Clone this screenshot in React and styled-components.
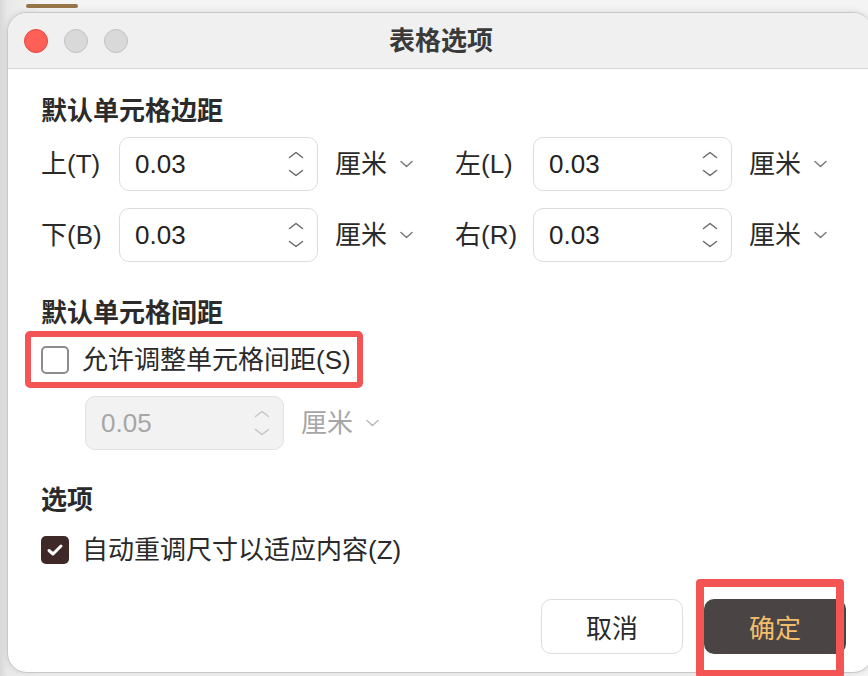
import React from "react";
import styled, { createGlobalStyle } from "styled-components";

const GlobalStyle = createGlobalStyle`
  html, body {
    margin: 0;
    padding: 0;
    background: #f3f3f3;
  }
  * {
    box-sizing: border-box;
  }
`;

const FONT = `"Liberation Sans", "Noto Sans CJK SC", sans-serif`;

const Page = styled.div`
  width: 868px;
  height: 676px;
  overflow: hidden;
  background: linear-gradient(90deg, #d8d8d8 0px, #e8e8e8 7px, #f4f4f4 40px);
  font-family: ${FONT};
  color: #2a2a2a;
  display: flex;
  flex-direction: column;
`;

const TopStrip = styled.div`
  height: 12px;
  padding: 4px 0 0 26px;
  flex-shrink: 0;
`;

const DockBar = styled.div`
  width: 52px;
  height: 3.5px;
  border-radius: 2px;
  background: #977548;
`;

const Window = styled.div`
  margin-left: 7px;
  width: 866px;
  height: 661px;
  flex-shrink: 0;
  background: #ffffff;
  border: 1px solid #c8c8c8;
  border-radius: 20px;
  box-shadow: 0 0 6px rgba(0, 0, 0, 0.12);
  display: flex;
  flex-direction: column;
`;

const TitleBar = styled.div`
  height: 56px;
  flex-shrink: 0;
  background: #f0f0f0;
  border-bottom: 1px solid #d6d6d6;
  border-radius: 19px 19px 0 0;
  display: grid;
  grid-template-columns: 1fr auto 1fr;
  align-items: center;
  padding: 0 14px 0 16px;
`;

const Lights = styled.div`
  display: flex;
  gap: 16px;
`;

const Light = styled.span`
  width: 24px;
  height: 24px;
  border-radius: 50%;
  background: ${(p) => (p.$red ? "#fe5f57" : "#d9d9d9")};
  border: 1px solid ${(p) => (p.$red ? "#e2463f" : "#c2c2c2")};
`;

const Title = styled.div`
  font-size: 26px;
  font-weight: 700;
  color: #3a3a3a;
  line-height: 32px;
`;

const Body = styled.div`
  flex: 1;
  padding: 26px 0 0 33px;
  display: flex;
  flex-direction: column;
  align-items: flex-start;
`;

const Heading = styled.div`
  font-size: 26px;
  font-weight: 700;
  line-height: 32px;
  color: #2b2b2b;
  margin-top: ${(p) => p.$top || 0}px;
`;

const MarginGrid = styled.div`
  margin-top: 10px;
  display: grid;
  grid-template-columns: 414px 414px;
  row-gap: 17px;
`;

const FieldGroup = styled.div`
  display: flex;
  align-items: center;
`;

const Label = styled.div`
  width: 78px;
  font-size: 26px;
  line-height: 34px;
  color: #2a2a2a;
`;

const Spin = styled.div`
  width: 199px;
  height: 54px;
  border-radius: 10px;
  border: 1.5px solid ${(p) => (p.$disabled ? "#e2e2e2" : "#dcdcdc")};
  background: ${(p) => (p.$disabled ? "#f2f2f2" : "#ffffff")};
  display: flex;
  align-items: center;
  justify-content: space-between;
  padding: 0 13px 0 15px;
  font-size: 26px;
  color: ${(p) => (p.$disabled ? "#a6a6a6" : "#222222")};
`;

const Unit = styled.div`
  display: flex;
  align-items: center;
  gap: 13px;
  padding-left: 17px;
  font-size: 26px;
  line-height: 34px;
  color: ${(p) => (p.$disabled ? "#a6a6a6" : "#2a2a2a")};
`;

const Highlight = styled.div`
  margin: 2px 0 0 -16px;
  height: 57px;
  border: 6px solid #f45454;
  border-radius: 5px;
  display: flex;
  align-items: center;
  padding: 0 6px 0 10px;
`;

const CheckRow = styled.label`
  display: flex;
  align-items: center;
  gap: 13px;
  font-size: 26px;
  line-height: 34px;
  color: #2a2a2a;
  margin-top: ${(p) => p.$top || 0}px;
`;

const Box = styled.span`
  width: 28px;
  height: 28px;
  border-radius: 5px;
  display: flex;
  align-items: center;
  justify-content: center;
  background: ${(p) => (p.$checked ? "#3e2828" : "#ffffff")};
  border: ${(p) => (p.$checked ? "none" : "2px solid #8c8c8c")};
`;

const SpacingRow = styled.div`
  margin: 8px 0 0 44px;
  display: flex;
  align-items: center;
`;

const Footer = styled.div`
  align-self: stretch;
  margin-top: 32px;
  display: flex;
  justify-content: flex-end;
  gap: 21px;
  padding-right: 26px;
`;

const Button = styled.button`
  position: relative;
  width: 142px;
  height: 55px;
  border-radius: 10px;
  font-family: ${FONT};
  font-size: 26px;
  border: ${(p) => (p.$primary ? "none" : "1.5px solid #dedede")};
  background: ${(p) => (p.$primary ? "#4a4544" : "#ffffff")};
  color: ${(p) => (p.$primary ? "#f3bd6c" : "#2a2a2a")};
`;

const ButtonMark = styled.span`
  position: absolute;
  left: -8px;
  right: 2px;
  top: -20px;
  bottom: -24px;
  border: 8px solid #f45454;
  border-radius: 4px;
  pointer-events: none;
`;

const Chevron = ({ color = "#7a7a7a" }) => (
  <svg width="13" height="8" viewBox="0 0 13 8" fill="none">
    <path d="M1 1.5 L6.5 6.5 L12 1.5" stroke={color} strokeWidth="1.5" strokeLinecap="round" strokeLinejoin="round" />
  </svg>
);

const Stepper = ({ color = "#6a6a6a" }) => (
  <svg width="16" height="26" viewBox="0 0 16 26" fill="none">
    <path d="M1.5 6.5 L8 1.5 L14.5 6.5" stroke={color} strokeWidth="1.5" strokeLinecap="round" strokeLinejoin="round" />
    <path d="M1.5 19.5 L8 24.5 L14.5 19.5" stroke={color} strokeWidth="1.5" strokeLinecap="round" strokeLinejoin="round" />
  </svg>
);

const Tick = () => (
  <svg width="18" height="14" viewBox="0 0 18 14" fill="none">
    <path d="M3 7.5 L7 11 L15 3" stroke="#ffffff" strokeWidth="3" strokeLinecap="round" strokeLinejoin="round" />
  </svg>
);

const margins = [
  { label: "上(T)", value: "0.03" },
  { label: "左(L)", value: "0.03" },
  { label: "下(B)", value: "0.03" },
  { label: "右(R)", value: "0.03" },
];

function SpinField({ value, disabled }) {
  return (
    <>
      <Spin $disabled={disabled}>
        <span>{value}</span>
        <Stepper color={disabled ? "#c4c4c4" : "#6a6a6a"} />
      </Spin>
      <Unit $disabled={disabled}>
        厘米
        <Chevron color={disabled ? "#b8b8b8" : "#7a7a7a"} />
      </Unit>
    </>
  );
}

export default function App() {
  return (
    <Page>
      <GlobalStyle />
      <TopStrip>
        <DockBar />
      </TopStrip>
      <Window>
        <TitleBar>
          <Lights>
            <Light $red />
            <Light />
            <Light />
          </Lights>
          <Title>表格选项</Title>
          <div />
        </TitleBar>
        <Body>
          <Heading>默认单元格边距</Heading>
          <MarginGrid>
            {margins.map((m) => (
              <FieldGroup key={m.label}>
                <Label>{m.label}</Label>
                <SpinField value={m.value} />
              </FieldGroup>
            ))}
          </MarginGrid>

          <Heading $top={35}>默认单元格间距</Heading>
          <Highlight>
            <CheckRow>
              <Box />
              允许调整单元格间距(S)
            </CheckRow>
          </Highlight>
          <SpacingRow>
            <SpinField value="0.05" disabled />
          </SpacingRow>

          <Heading $top={34}>选项</Heading>
          <CheckRow $top={17}>
            <Box $checked>
              <Tick />
            </Box>
            自动重调尺寸以适应内容(Z)
          </CheckRow>

          <Footer>
            <Button>取消</Button>
            <Button $primary>
              确定
              <ButtonMark />
            </Button>
          </Footer>
        </Body>
      </Window>
    </Page>
  );
}
